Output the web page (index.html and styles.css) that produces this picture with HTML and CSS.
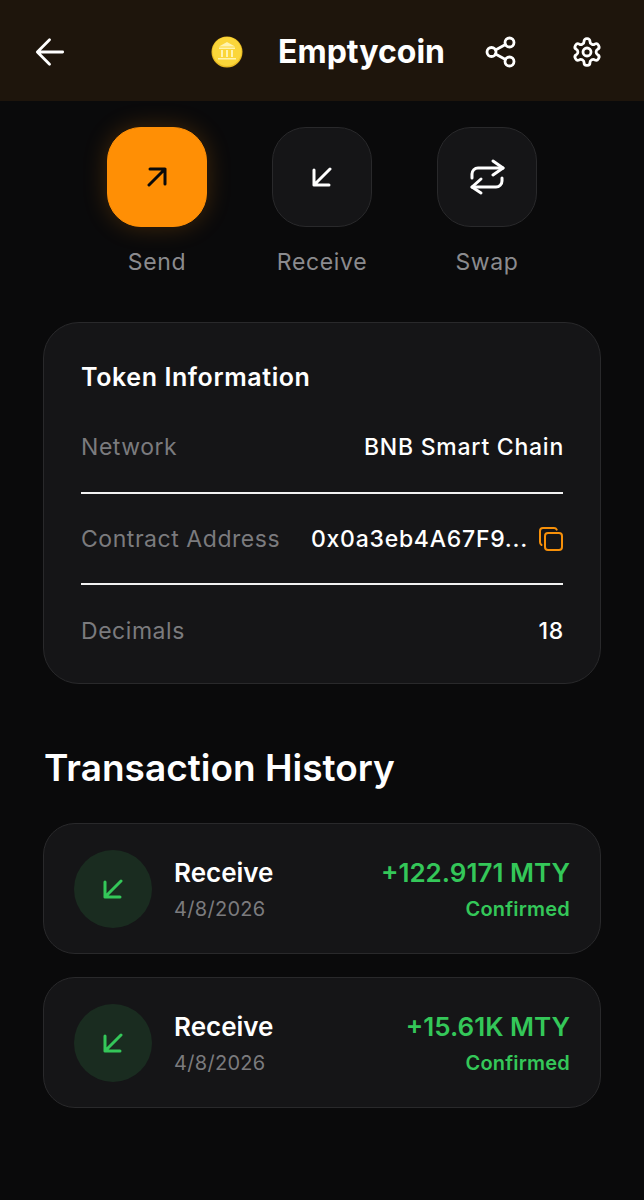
FILE: index.html
```html
<!DOCTYPE html>
<html lang="en">
<head>
    <meta charset="UTF-8">
    <meta name="viewport" content="width=device-width, initial-scale=1.0">
    <title>Emptycoin</title>
    <link rel="stylesheet" href="styles.css">
</head>
<body>
    <header class="top-bar">
        <svg class="back-icon" viewBox="0 0 32 32" fill="none" stroke="#fff" stroke-width="3" stroke-linecap="round" stroke-linejoin="round">
            <path d="M29.5 16H3M15.500 3L2.500 16l13 13"/>
        </svg>
        <div class="coin-title">
            <svg class="coin" viewBox="0 0 32 32">
                <circle cx="16" cy="16" r="15.500" fill="#e8b923"/>
                <circle cx="16" cy="15.500" r="14.500" fill="#fbd63a"/>
                <path d="M16 6l8 4.500H8z M8 11.500h16v1.500H8z M7 22h18v1.500H7z" fill="#fff3b0"/>
                <path d="M10 14h2v7h-2z M15 14h2v7h-2z M20 14h2v7h-2z" fill="#fff3b0"/>
            </svg>
            <span class="coin-name">Emptycoin</span>
        </div>
        <div class="top-actions">
            <svg class="top-icon" viewBox="0 0 32 32" fill="none" stroke="#fff" stroke-width="2.800" stroke-linecap="round">
                <circle cx="24.500" cy="6.500" r="4.500"/>
                <circle cx="6.500" cy="16" r="4.500"/>
                <circle cx="24.500" cy="25.500" r="4.500"/>
                <path d="M10.500 13.900l10-5.300M10.500 18.100l10 5.300"/>
            </svg>
            <svg class="top-icon" viewBox="0 0 24 24" fill="none" stroke="#fff" stroke-width="2.100" stroke-linecap="round" stroke-linejoin="round">
                <path d="M12.220 2h-.44a2 2 0 0 0-2 2v.18a2 2 0 0 1-1 1.730l-.43.250a2 2 0 0 1-2 0l-.15-.080a2 2 0 0 0-2.730.730l-.22.380a2 2 0 0 0 .73 2.730l.15.100a2 2 0 0 1 1 1.720v.510a2 2 0 0 1-1 1.740l-.15.090a2 2 0 0 0-.73 2.730l.22.380a2 2 0 0 0 2.730.730l.15-.080a2 2 0 0 1 2 0l.43.250a2 2 0 0 1 1 1.730V20a2 2 0 0 0 2 2h.44a2 2 0 0 0 2-2v-.18a2 2 0 0 1 1-1.730l.43-.250a2 2 0 0 1 2 0l.15.080a2 2 0 0 0 2.730-.730l.22-.390a2 2 0 0 0-.73-2.730l-.15-.080a2 2 0 0 1-1-1.740v-.500a2 2 0 0 1 1-1.740l.15-.090a2 2 0 0 0 .73-2.730l-.22-.380a2 2 0 0 0-2.730-.730l-.15.080a2 2 0 0 1-2 0l-.43-.250a2 2 0 0 1-1-1.730V4a2 2 0 0 0-2-2z"/>
                <circle cx="12" cy="12" r="3"/>
            </svg>
        </div>
    </header>

    <section class="actions">
        <div class="action">
            <div class="tile tile-send">
                <svg class="tile-icon" viewBox="0 0 20 20" fill="none" stroke="#0a0a0a" stroke-width="3" stroke-linecap="round" stroke-linejoin="round">
                    <path d="M2 18L18 2M3 2h15v15"/>
                </svg>
            </div>
            <span class="action-label">Send</span>
        </div>
        <div class="action">
            <div class="tile">
                <svg class="tile-icon" viewBox="0 0 20 20" fill="none" stroke="#fff" stroke-width="3" stroke-linecap="round" stroke-linejoin="round">
                    <path d="M18 2L2 18M2 3v15h15"/>
                </svg>
            </div>
            <span class="action-label">Receive</span>
        </div>
        <div class="action">
            <div class="tile">
                <svg class="swap-icon" viewBox="-2 -2 36 38" fill="none" stroke="#fff" stroke-width="3" stroke-linecap="round" stroke-linejoin="round">
                    <path d="M22 1l10 7-10 7"/>
                    <path d="M1 18v-4a6 6 0 0 1 6-6h25"/>
                    <path d="M10 19L1 27l9 6"/>
                    <path d="M31 18v3a6 6 0 0 1-6 6H1"/>
                </svg>
            </div>
            <span class="action-label">Swap</span>
        </div>
    </section>

    <section class="info-card">
        <h2 class="info-title">Token Information</h2>
        <div class="info-row">
            <span class="info-key">Network</span>
            <span class="info-value">BNB Smart Chain</span>
        </div>
        <div class="info-row">
            <span class="info-key">Contract Address</span>
            <span class="info-address">
                <span class="info-value">0x0a3eb4A67F9...</span>
                <svg class="copy-icon" viewBox="0 0 24 24" fill="none" stroke="#f79009" stroke-width="2" stroke-linecap="round" stroke-linejoin="round">
                    <rect x="6" y="6" width="17" height="17" rx="3"/>
                    <path d="M2.500 18C1.500 17.500 1 16.500 1 15V4c0-1.700 1.300-3 3-3h11c1.200 0 2.200.600 2.700 1.600"/>
                </svg>
            </span>
        </div>
        <div class="info-row">
            <span class="info-key">Decimals</span>
            <span class="info-value">18</span>
        </div>
    </section>

    <h2 class="history-title">Transaction History</h2>

    <section class="history">
        <div class="tx">
            <div class="tx-circle">
                <svg class="tx-icon" viewBox="0 0 20 20" fill="none" stroke="#34c759" stroke-width="3" stroke-linecap="round" stroke-linejoin="round">
                    <path d="M18 2L2 18M2 3v15h15"/>
                </svg>
            </div>
            <div class="tx-main">
                <span class="tx-name">Receive</span>
                <span class="tx-date">4/8/2026</span>
            </div>
            <div class="tx-side">
                <span class="tx-amount">+122.9171 MTY</span>
                <span class="tx-status">Confirmed</span>
            </div>
        </div>
        <div class="tx">
            <div class="tx-circle">
                <svg class="tx-icon" viewBox="0 0 20 20" fill="none" stroke="#34c759" stroke-width="3" stroke-linecap="round" stroke-linejoin="round">
                    <path d="M18 2L2 18M2 3v15h15"/>
                </svg>
            </div>
            <div class="tx-main">
                <span class="tx-name">Receive</span>
                <span class="tx-date">4/8/2026</span>
            </div>
            <div class="tx-side">
                <span class="tx-amount">+15.61K MTY</span>
                <span class="tx-status">Confirmed</span>
            </div>
        </div>
    </section>
</body>
</html>
```

FILE: styles.css
```css
body {
    margin: 0;
    min-height: 1200px;
    background-color: #0a0a0b;
    color: #fff;
    font-family: Inter, "Liberation Sans", sans-serif;
}

/* Header */
.top-bar {
    height: 101px;
    padding: 2px 41px 0 35px;
    box-sizing: border-box;
    display: flex;
    align-items: center;
    background-color: #1e150c;
}

.back-icon {
    width: 30px;
    height: 30px;
}

.coin-title {
    margin-left: 146px;
    display: flex;
    align-items: center;
    gap: 35px;
}

.coin {
    width: 32px;
    height: 32px;
}

.coin-name {
    font-size: 32px;
    font-weight: 700;
}

.top-actions {
    margin-left: auto;
    display: flex;
    align-items: center;
    gap: 54px;
}

.top-icon {
    width: 32px;
    height: 32px;
}

/* Actions */
.actions {
    margin-top: 26px;
    display: flex;
    justify-content: center;
    gap: 65px;
}

.action {
    display: flex;
    flex-direction: column;
    align-items: center;
    gap: 21px;
}

.tile {
    width: 100px;
    height: 100px;
    box-sizing: border-box;
    display: flex;
    align-items: center;
    justify-content: center;
    background-color: #151517;
    border: 1px solid #29292b;
    border-radius: 34px;
}

.tile-send {
    background-color: #ff8f05;
    border-color: #ff8f05;
    box-shadow: 0 0 24px rgba(255, 143, 5, 0.22);
}

.tile-icon {
    width: 20px;
    height: 20px;
}

.swap-icon {
    width: 36px;
    height: 38px;
}

.action-label {
    font-size: 23px;
    line-height: 28px;
    letter-spacing: 0.65px;
    color: #8b8b8e;
}

/* Token info */
.info-card {
    margin: 46px 43px 0;
    padding: 36px 37px 7px;
    background-color: #151517;
    border: 1px solid #29292b;
    border-radius: 36px;
}

.info-title {
    margin: 0 0 7px;
    font-size: 25px;
    line-height: 36px;
    font-weight: 600;
    letter-spacing: 0.6px;
}

.info-row {
    height: 91px;
    box-sizing: border-box;
    display: flex;
    align-items: center;
    justify-content: space-between;
    border-bottom: 2px solid #f2f2f2;
    font-size: 23px;
}

.info-title + .info-row {
    height: 92px;
}

.info-row:last-child {
    border-bottom: none;
}

.info-key {
    color: #7b7b7e;
    letter-spacing: 0.55px;
}

.info-value {
    margin-right: -1px;
    font-weight: 500;
    letter-spacing: 0.75px;
}

.info-address {
    display: flex;
    align-items: center;
    gap: 12px;
}

.copy-icon {
    width: 24px;
    height: 24px;
}

/* History */
.history-title {
    margin: 62px 44px 33px;
    font-size: 37px;
    line-height: 44px;
    font-weight: 600;
}

.history {
    margin: 0 43px;
    display: flex;
    flex-direction: column;
    gap: 23px;
}

.tx {
    height: 131px;
    padding: 0 30px;
    box-sizing: border-box;
    display: flex;
    align-items: center;
    background-color: #151517;
    border: 1px solid #29292b;
    border-radius: 32px;
}

.tx-circle {
    width: 78px;
    height: 78px;
    display: flex;
    align-items: center;
    justify-content: center;
    background-color: #1a2c20;
    border-radius: 50%;
}

.tx-icon {
    width: 20px;
    height: 20px;
}

.tx-main {
    margin-left: 22px;
    padding-top: 3px;
    display: flex;
    flex-direction: column;
    gap: 8px;
}

.tx-name {
    font-size: 26px;
    line-height: 30px;
    font-weight: 600;
}

.tx-date {
    font-size: 20px;
    line-height: 26px;
    letter-spacing: 0.3px;
    color: #7b7b7e;
}

.tx-side {
    margin-left: auto;
    padding-top: 3px;
    display: flex;
    flex-direction: column;
    align-items: flex-end;
    gap: 8px;
}

.tx-amount {
    font-size: 26px;
    line-height: 30px;
    font-weight: 600;
    color: #34c759;
}

.tx-status {
    font-size: 20px;
    line-height: 26px;
    font-weight: 600;
    letter-spacing: 0.2px;
    color: #34c759;
}
```
